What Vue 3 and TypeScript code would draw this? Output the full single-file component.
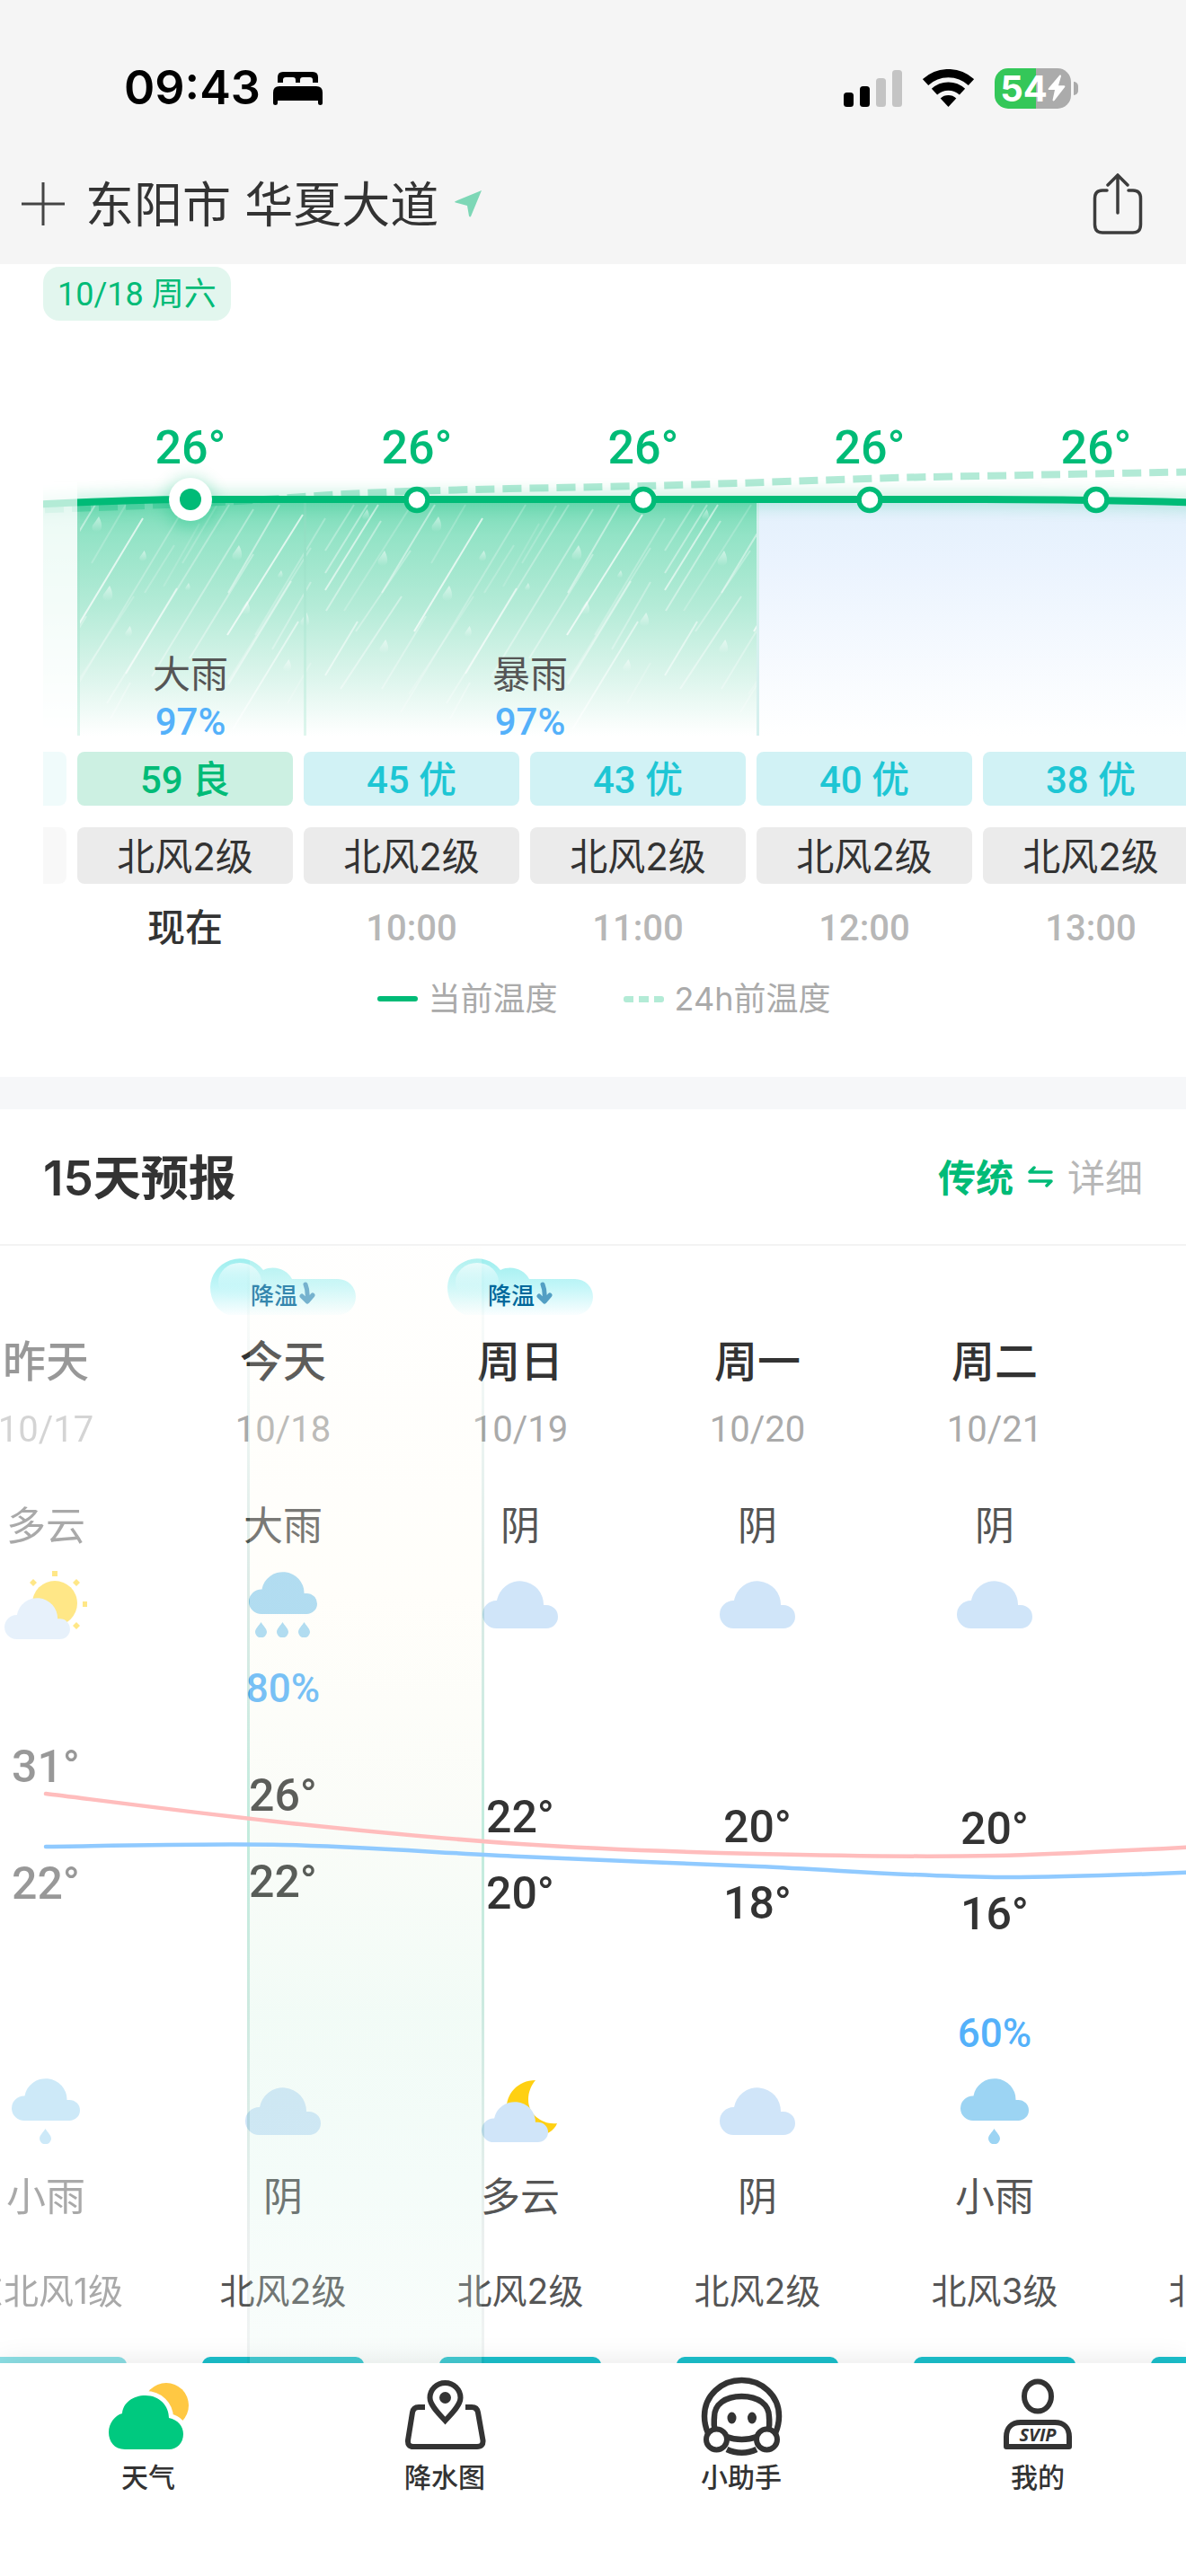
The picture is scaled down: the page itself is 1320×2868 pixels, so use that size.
<script setup lang="ts">
interface Hour {
  temp: string
  aqi: string
  level: 'good' | 'fine'
  wind: string
  time: string
  past?: boolean
}

interface Day {
  name: string
  date: string
  text: string
  icon: string
  rain: string
  high: number | null
  low: number | null
  highY: number
  lowY: number
  nightRain: string
  nightIcon: string
  nightText: string
  wind: string
  cooling?: boolean
  past?: boolean
}

const hours: Hour[] = [
  { temp: '', aqi: '', level: 'good', wind: '', time: '', past: true },
  { temp: '26°', aqi: '59 良', level: 'fine', wind: '北风2级', time: '现在' },
  { temp: '26°', aqi: '45 优', level: 'good', wind: '北风2级', time: '10:00' },
  { temp: '26°', aqi: '43 优', level: 'good', wind: '北风2级', time: '11:00' },
  { temp: '26°', aqi: '40 优', level: 'good', wind: '北风2级', time: '12:00' },
  { temp: '26°', aqi: '38 优', level: 'good', wind: '北风2级', time: '13:00' },
]

// Rain periods, measured in hour columns.
const periods = [
  { text: '', rain: '', span: 1 },
  { text: '大雨', rain: '97%', span: 1 },
  { text: '暴雨', rain: '97%', span: 2 },
  { text: '', rain: '', span: 2 },
]

// Rain streaks inside one 378px tile: x1, y1, x2, y2, opacity.
const streaks: number[][] = [
  [122, 205, 63, 303, 0.45], [175, 220, 99, 346, 0.7], [213, 298, 156, 393, 0.55],
  [62, 223, 1, 323, 0.4], [85, 307, 17, 410, 0.4], [36, 335, 0, 395, 0.5],
  [223, 205, 84, 436, 0.25], [271, 205, 135, 426, 0.3], [298, 210, 185, 396, 0.35],
  [165, 307, 93, 416, 0.2], [95, 256, 34, 346, 0.3], [112, 329, 63, 410, 0.3],
  [257, 206, 219, 270, 0.2], [156, 205, 118, 270, 0.2], [210, 250, 177, 303, 0.2],
  [238, 226, 198, 296, 0.15], [161, 403, 139, 443, 0.3], [298, 260, 227, 376, 0.35],
  [327, 205, 270, 303, 0.45], [353, 216, 269, 350, 0.7], [362, 253, 269, 403, 0.25],
  [340, 290, 270, 405, 0.45], [348, 335, 275, 455, 0.5], [362, 291, 319, 366, 0.3],
  [362, 381, 336, 426, 0.2], [32, 205, 0, 256, 0.3], [47, 205, 0, 281, 0.4],
  [59, 205, 0, 300, 0.6], [96, 205, 21, 323, 0.2], [378, 220, 300, 350, 0.25],
]

// Falling drops inside one tile: x, y, scale.
const drops: number[][] = [
  [118, 218, 1], [171, 256, 0.7], [274, 250, 1], [130, 295, 1], [222, 292, 0.5],
  [155, 340, 0.7], [58, 256, 1], [41, 210, 0.7], [325, 278, 0.5], [350, 325, 0.9],
  [331, 377, 0.8], [60, 355, 0.9], [284, 312, 0.9],
]

const rainAreas = [
  { id: 'rain-a', tiles: [150] },
  { id: 'rain-b', tiles: [150, 528, 906] },
]

const days: Day[] = [
  { name: '昨天', date: '10/17', text: '多云', icon: 'sun-cloud', rain: '', high: 31, low: 22, highY: 94, lowY: 153, nightRain: '', nightIcon: 'light-rain', nightText: '小雨', wind: '东北风1级', past: true },
  { name: '今天', date: '10/18', text: '大雨', icon: 'heavy-rain', rain: '80%', high: 26, low: 22, highY: 126, lowY: 151, nightRain: '', nightIcon: 'overcast', nightText: '阴', wind: '北风2级', cooling: true },
  { name: '周日', date: '10/19', text: '阴', icon: 'overcast', rain: '', high: 22, low: 20, highY: 150, lowY: 164, nightRain: '', nightIcon: 'moon-cloud', nightText: '多云', wind: '北风2级', cooling: true },
  { name: '周一', date: '10/20', text: '阴', icon: 'overcast', rain: '', high: 20, low: 18, highY: 161, lowY: 175, nightRain: '', nightIcon: 'overcast', nightText: '阴', wind: '北风2级' },
  { name: '周二', date: '10/21', text: '阴', icon: 'overcast', rain: '', high: 20, low: 16, highY: 163, lowY: 187, nightRain: '60%', nightIcon: 'light-rain', nightText: '小雨', wind: '北风3级' },
  { name: '', date: '', text: '', icon: '', rain: '', high: null, low: null, highY: 151, lowY: 180, nightRain: '', nightIcon: '', nightText: '', wind: '北风3级' },
]

const DAY_WIDTH = 264

// Catmull-Rom curve through one point per day.
function curve(values: number[]): string {
  const pts = values.map((y, i) => [DAY_WIDTH * i + DAY_WIDTH / 2, y])
  let d = `M${pts[0][0]} ${pts[0][1]}`
  for (let i = 0; i < pts.length - 1; i++) {
    const a = pts[Math.max(i - 1, 0)]
    const b = pts[i]
    const c = pts[i + 1]
    const e = pts[Math.min(i + 2, pts.length - 1)]
    d += ` C${b[0] + (c[0] - a[0]) / 6} ${b[1] + (c[1] - a[1]) / 6} ${c[0] - (e[0] - b[0]) / 6} ${c[1] - (e[1] - b[1]) / 6} ${c[0]} ${c[1]}`
  }
  return d
}

const highCurve = curve(days.map((d) => d.highY))
const lowCurve = curve(days.map((d) => d.lowY))

const tempStyle = (d: Day) => ({
  paddingTop: `${d.highY - 60}px`,
  rowGap: `${d.lowY - d.highY + 11}px`,
})
</script>

<template>
  <div class="app">
    <svg class="defs" aria-hidden="true">
      <symbol id="cloud" viewBox="0 0 84 54" preserveAspectRatio="none">
        <path d="M15.500 54A15.500 15.500 0 0 1 15.500 23H16A26.200 26.200 0 0 1 68 28H71A13 13 0 0 1 71 54Z" />
      </symbol>
      <symbol id="drop" viewBox="0 0 13 17">
        <path d="M6.500 0C9 4 13 7.500 13 11A6.500 6.300 0 0 1 0 11C0 7.500 4 4 6.500 0Z" />
      </symbol>
      <symbol id="overcast" viewBox="0 0 96 96">
        <use href="#cloud" x="6" y="20" width="84" height="54" fill="#d0e5f9" />
      </symbol>
      <symbol id="light-rain" viewBox="0 0 96 96">
        <g fill="#9cd4f3">
          <use href="#cloud" x="10" y="10" width="76" height="48" />
          <use href="#drop" x="41" y="67" width="13" height="17" />
        </g>
      </symbol>
      <symbol id="heavy-rain" viewBox="0 0 96 96">
        <g fill="#9cd4f3">
          <use href="#cloud" x="10" y="10" width="76" height="48" />
          <use href="#drop" x="17" y="67" width="13" height="17" />
          <use href="#drop" x="41" y="67" width="13" height="17" />
          <use href="#drop" x="65" y="67" width="13" height="17" />
        </g>
      </symbol>
      <symbol id="sun-cloud" viewBox="0 0 96 96">
        <g fill="#ffd012">
          <circle cx="58" cy="46" r="25" />
          <rect x="55" y="10" width="6" height="6" />
          <rect x="89" y="44" width="5" height="6" />
          <path d="M34 19l4 4-4 4-4-4zM82 19l4 4-4 4-4-4zM82 67l4 4-4 4-4-4z" />
        </g>
        <use href="#cloud" x="2" y="39" width="73" height="47" fill="#d0e5f9" />
      </symbol>
      <symbol id="moon-cloud" viewBox="0 0 96 96">
        <path d="M65 13C45 13 32 29 33 45C34 64 50 75 65 75C77 75 86 69 89 61C74 63 57 52 57 35C57 26 60 19 65 13Z" fill="#ffd012" />
        <use href="#cloud" x="5" y="36" width="74" height="46" fill="#d0e5f9" />
      </symbol>
    </svg>

    <header class="top">
      <div class="status">
        <div class="status-left">
          <span class="clock">09:43</span>
          <svg width="55" height="37" viewBox="0 0 55 37">
            <path d="M5 12V6Q5 0 11 0H44Q50 0 50 6V12H44V9Q44 6 41 6H33Q30 6 30 9V12H25V9Q25 6 22 6H14Q11 6 11 9V12Z" />
            <path d="M0 23Q0 16 7 16H48Q55 16 55 23V35Q55 37 52.500 37Q50 37 50 35V32H5V35Q5 37 2.500 37Q0 37 0 35Z" />
          </svg>
        </div>
        <div class="status-right">
          <svg width="65" height="42" viewBox="0 0 65 42">
            <rect x="0" y="26" width="11" height="16" rx="3.500" />
            <rect x="18" y="19" width="11" height="23" rx="3.500" />
            <rect x="36" y="10" width="11" height="32" rx="3.500" fill="#c4c4c4" />
            <rect x="54" y="1" width="11" height="41" rx="3.500" fill="#c4c4c4" />
          </svg>
          <svg width="57" height="42" viewBox="0 0 57 42">
            <g fill="none" stroke="#000" stroke-width="9.200">
              <path d="M3.100 14.500A37.400 37.400 0 0 1 53.900 14.500" />
              <path d="M13 25.200A22.800 22.800 0 0 1 44 25.200" />
            </g>
            <path d="M28.500 42L19.700 32.400A13 13 0 0 1 37.300 32.400Z" />
          </svg>
          <div class="battery">
            <div class="battery-body">
              <span>54</span>
              <svg width="20" height="30" viewBox="0 0 20 30"><path d="M13.500 0.500L0.800 15.500Q0 17 1.800 17H8L5.500 28.500Q6 30 7.500 29L19.300 13.800Q20 12.200 18.200 12.200H12L15 1.800Q15 0 13.500 0.500Z" fill="#fff" /></svg>
            </div>
            <i class="battery-cap"></i>
          </div>
        </div>
      </div>
      <div class="bar">
        <button class="icon-btn" type="button" aria-label="添加城市">
          <svg width="48" height="48" viewBox="0 0 48 48"><path d="M24 0V48M0 24H48" stroke="#444" stroke-width="3" /></svg>
        </button>
        <h1 class="place">东阳市 华夏大道</h1>
        <svg class="locate" width="30" height="30" viewBox="0 0 30 30"><path d="M30 0L18 29Q17 30 16 28.500L14 17L1 13.500Q-0.500 12.500 1 12Z" fill="#7dd7b6" /></svg>
        <button class="icon-btn share" type="button" aria-label="分享">
          <svg width="56" height="68" viewBox="0 0 56 68" fill="none" stroke="#3c3c3c" stroke-width="3.500" stroke-linecap="round">
            <path d="M16 19H11Q2.500 19 2.500 28V57Q2.500 66 11 66H45Q53.500 66 53.500 57V28Q53.500 19 45 19H40" />
            <path d="M28 2V44M17 13L28 2L39 13" />
          </svg>
        </button>
      </div>
    </header>

    <main class="content">
      <section class="hourly">
        <div class="day-tag">10/18 周六</div>
        <div class="scroller">
          <div class="track">
            <div class="chart">
              <svg class="chart-bg" width="1512" height="462" viewBox="0 0 1512 462">
                <defs>
                  <linearGradient id="rain-fill" x1="0" y1="0" x2="0" y2="1">
                    <stop offset="0" stop-color="#76dbb6" />
                    <stop offset="0.150" stop-color="#93e3c6" />
                    <stop offset="0.450" stop-color="#b4ebd7" />
                    <stop offset="0.750" stop-color="#dcf5ec" />
                    <stop offset="1" stop-color="#fff" />
                  </linearGradient>
                  <linearGradient id="cloud-fill" x1="0" y1="0" x2="0" y2="1">
                    <stop offset="0" stop-color="#e3f0fc" />
                    <stop offset="0.250" stop-color="#eaf3fe" />
                    <stop offset="1" stop-color="#fff" />
                  </linearGradient>
                  <linearGradient id="edge" x1="0" y1="0" x2="0" y2="1">
                    <stop offset="0" stop-color="#86dcbd" />
                    <stop offset="1" stop-color="#dff6ee" />
                  </linearGradient>
                  <linearGradient id="drop-fill" x1="0" y1="0" x2="0" y2="1">
                    <stop offset="0" stop-color="#fff" stop-opacity="0.550" />
                    <stop offset="1" stop-color="#fff" stop-opacity="0" />
                  </linearGradient>
                  <filter id="glow" x="-10%" y="-400%" width="120%" height="900%" filterUnits="userSpaceOnUse">
                    <feGaussianBlur stdDeviation="9" />
                  </filter>
                  <clipPath id="rain-a"><rect x="252" y="203" width="252" height="259" /></clipPath>
                  <clipPath id="rain-b"><rect x="504" y="203" width="504" height="259" /></clipPath>
                </defs>
                <rect x="0" y="203" width="252" height="259" fill="url(#rain-fill)" opacity="0.500" />
                <rect x="252" y="200" width="756" height="262" fill="url(#rain-fill)" />
                <rect x="1008" y="200" width="504" height="262" fill="url(#cloud-fill)" />
                <g v-for="area in rainAreas" :key="area.id" :clip-path="`url(#${area.id})`">
                  <g v-for="t in area.tiles" :key="t" :transform="`translate(${t} 0)`">
                    <line v-for="(s, i) in streaks" :key="i" :x1="s[0]" :y1="s[1]" :x2="s[2]" :y2="s[3]" stroke="#fff" :stroke-opacity="s[4]" stroke-width="2" />
                    <path v-for="(p, i) in drops" :key="'d' + i" :transform="`translate(${p[0]} ${p[1]}) scale(${p[2]})`" d="M8 0Q12 8 11 13Q9 18 4 17Q-1 15 1 10Q4 6 8 0Z" fill="url(#drop-fill)" />
                  </g>
                </g>
                <rect x="252" y="200" width="3" height="262" fill="url(#edge)" />
                <rect x="504" y="200" width="3" height="262" fill="url(#edge)" />
                <rect x="1008" y="200" width="3" height="262" fill="#d5f0ee" />
                <path d="M126 208C230 204 300 199 378 199H1260C1386 199 1440 201 1512 203" stroke="#00bb77" stroke-width="12" fill="none" opacity="0.300" filter="url(#glow)" />
                <path d="M126 213C260 209 400 204 504 196S760 187 882 184S1140 175 1200 174S1400 170 1512 168" stroke="#00bb77" stroke-opacity="0.300" stroke-width="8" stroke-dasharray="21 9" fill="none" />
                <path d="M126 208C230 204 300 199 378 199H1260C1386 199 1440 201 1512 203" stroke="#00bb77" stroke-width="8" fill="none" />
                <rect x="0" y="180" width="252" height="282" fill="#fff" opacity="0.700" />
                <circle cx="378" cy="203" r="28" fill="#00bb77" opacity="0.300" filter="url(#glow)" />
                <circle cx="378" cy="199" r="24" fill="#fff" />
                <circle cx="378" cy="199" r="12" fill="#00bb77" />
                <circle v-for="n in 4" :key="n" :cx="378 + 252 * n" cy="199.500" r="12" fill="#fff" stroke="#00bb77" stroke-width="5.500" />
              </svg>
              <div class="temps">
                <span v-for="(h, i) in hours" :key="i">{{ h.temp }}</span>
              </div>
              <div class="periods">
                <div v-for="(p, i) in periods" :key="i" class="period" :style="{ flexGrow: p.span }">
                  <span class="period-text">{{ p.text }}</span>
                  <span class="period-rain">{{ p.rain }}</span>
                </div>
              </div>
            </div>
            <ul class="hours">
              <li v-for="(h, i) in hours" :key="i" class="hour" :class="{ past: h.past, now: i === 1 }">
                <span class="aqi" :class="h.level">{{ h.aqi }}</span>
                <span class="wind">{{ h.wind }}</span>
                <span class="time">{{ h.time }}</span>
              </li>
            </ul>
          </div>
        </div>
        <div class="legend">
          <span class="legend-item"><i class="line"></i>当前温度</span>
          <span class="legend-item"><i class="dash"><b></b><b></b><b></b></i>24h前温度</span>
        </div>
      </section>

      <section class="daily">
        <div class="daily-head">
          <h2>15天预报</h2>
          <button class="toggle" type="button">
            <span class="on">传统</span>
            <svg width="28" height="24" viewBox="0 0 28 24" fill="none" stroke="#00bb77" stroke-width="3.500" stroke-linecap="round" stroke-linejoin="round">
              <path d="M26 7H2L7 2M2 17H26L21 22" />
            </svg>
            <span>详细</span>
          </button>
        </div>
        <div class="days-view">
          <div class="days">
            <div v-for="(d, i) in days" :key="i" class="day" :class="{ past: d.past }">
              <div class="badge-slot">
                <div v-if="d.cooling" class="badge">
                  <svg class="badge-bg" width="162" height="64" viewBox="0 0 162 64">
                    <defs>
                      <linearGradient id="cool" gradientUnits="userSpaceOnUse" x1="0" y1="0" x2="0" y2="64">
                        <stop offset="0" stop-color="#9deeee" />
                        <stop offset="0.500" stop-color="#c2f6f8" />
                        <stop offset="1" stop-color="#fafeff" />
                      </linearGradient>
                      <linearGradient id="shine" x1="0" y1="0" x2="0" y2="1">
                        <stop offset="0" stop-color="#e4fbfc" />
                        <stop offset="1" stop-color="#c8f7f9" stop-opacity="0" />
                      </linearGradient>
                    </defs>
                    <path d="M20 64C8 60 0 48 0 33A33 33 0 0 1 59 14C72 8 86 14 91 24H142A20 20 0 0 1 142 64Z" fill="url(#cool)" />
                    <ellipse cx="33" cy="27" rx="24" ry="21" fill="url(#shine)" />
                  </svg>
                  <span>降温</span>
                  <svg width="18" height="26" viewBox="0 0 18 26" fill="none" stroke="#539fc4" stroke-width="5" stroke-linecap="round" stroke-linejoin="round"><path d="M7 3Q10 10 9 21M3 16L9 22L15 15" /></svg>
                </div>
              </div>
              <div class="day-name">{{ d.name }}</div>
              <div class="day-date">{{ d.date }}</div>
              <div class="day-text">{{ d.text }}</div>
              <svg class="day-icon" width="96" height="96"><use v-if="d.icon" :href="'#' + d.icon" /></svg>
              <div class="day-rain">{{ d.rain }}</div>
              <div class="day-temps" :style="tempStyle(d)">
                <span v-if="d.high !== null">{{ d.high }}°</span>
                <span v-if="d.low !== null">{{ d.low }}°</span>
              </div>
              <div class="day-rain night">{{ d.nightRain }}</div>
              <svg class="day-icon night" width="96" height="96"><use v-if="d.nightIcon" :href="'#' + d.nightIcon" /></svg>
              <div class="day-text night">{{ d.nightText }}</div>
              <div class="day-wind">{{ d.wind }}</div>
              <div class="day-aqi"></div>
            </div>
            <div class="today-mask"></div>
            <svg class="curves" width="1584" height="336" viewBox="0 0 1584 336" fill="none" stroke-width="4.500" stroke-linecap="round">
              <path :d="highCurve" stroke="#ffbdbd" />
              <path :d="lowCurve" stroke="#90caff" />
            </svg>
          </div>
        </div>
      </section>
    </main>

    <nav class="tabs">
      <a href="#weather" class="tab">
        <svg width="96" height="90" viewBox="0 0 96 90">
          <circle cx="68" cy="33" r="25" fill="#ffc843" />
          <path d="M22 82C10 82 4 73 4 63C4 53 11 44 19 42C20 30 31 22 45 22C60 22 71 33 71 47C81 49 87 56 87 65C87 75 80 82 71 82Z" fill="#fff" stroke="#fff" stroke-width="10" />
          <path d="M22 82C10 82 4 73 4 63C4 53 11 44 19 42C20 30 31 22 45 22C60 22 71 33 71 47C81 49 87 56 87 65C87 75 80 82 71 82Z" fill="#00c97f" />
        </svg>
        <span>天气</span>
      </a>
      <a href="#rain-map" class="tab">
        <svg width="96" height="90" viewBox="0 0 96 90" fill="none" stroke="#333" stroke-width="6">
          <path d="M26 35H19Q13 35 12 41L7 72Q6.500 79 13 79H84Q91 79 90.500 72L85 41Q84 35 78 35H71" />
          <path d="M48.500 8C58 8 65.500 15.500 65.500 24.500C65.500 33 55 43 48.500 50C42 43 31.500 33 31.500 24.500C31.500 15.500 39 8 48.500 8Z" />
          <circle cx="48.500" cy="24.500" r="6.500" fill="#333" stroke="none" />
        </svg>
        <span>降水图</span>
      </a>
      <a href="#assistant" class="tab">
        <svg width="96" height="90" viewBox="0 0 96 90" fill="none" stroke="#333" stroke-width="6.500">
          <path d="M11 64C7.500 56 7 50 7 45C7 22 26 5 48.500 5S90 22 90 45C90 50 89.500 56 86 64" />
          <path d="M19 62C16.500 52 18 50 18 46C18 32 30 23 48.500 23S79 32 79 46C79 50 80.500 52 78 62" />
          <path d="M32 68C42 72 55 72 65 68M32 82C42 87 55 87 65 82" />
          <circle cx="20.500" cy="71" r="11.500" fill="#fff" stroke-width="6" />
          <circle cx="76.500" cy="71" r="11.500" fill="#fff" stroke-width="6" />
          <ellipse cx="37.500" cy="47" rx="5" ry="6.500" fill="#333" stroke="none" />
          <ellipse cx="60" cy="47" rx="5" ry="6.500" fill="#333" stroke="none" />
        </svg>
        <span>小助手</span>
      </a>
      <a href="#mine" class="tab">
        <svg width="96" height="90" viewBox="0 0 96 90" fill="none" stroke="#333" stroke-width="6" stroke-linejoin="round">
          <ellipse cx="48" cy="23" rx="15" ry="16.500" />
          <path d="M13 79V68C13 58 19 52 29 52H67C77 52 83 58 83 68V79Z" />
          <text x="48" y="73" class="svip">SVIP</text>
        </svg>
        <span>我的</span>
      </a>
    </nav>
  </div>
</template>

<style>
body {
  margin: 0;
  background: #fff;
}
</style>

<style scoped>
.app {
  --green: #00bb77;
  --blue: #54b1fa;
  --ink: #333;
  --num: Roboto, "Noto Sans CJK SC", sans-serif;
  display: flex;
  flex-direction: column;
  height: 100vh;
  overflow: hidden;
  color: var(--ink);
  font-family: Inter, "Noto Sans CJK SC", sans-serif;
}
.defs {
  position: absolute;
  width: 0;
  height: 0;
}
svg {
  display: block;
  flex: none;
}
button {
  padding: 0;
  border: 0;
  background: none;
  color: inherit;
  font: inherit;
}
.top {
  flex: none;
  background: #f5f5f5;
}
.status {
  box-sizing: border-box;
  display: flex;
  justify-content: space-between;
  align-items: center;
  height: 160px;
  padding: 36px 120px 0 138px;
}
.status-left,
.status-right,
.battery {
  display: flex;
  align-items: center;
}
.status-left {
  gap: 14px;
}
.status-right {
  gap: 23px;
}
.clock {
  color: #000;
  font: 600 52px/60px Inter, sans-serif;
}
.battery {
  gap: 3px;
}
.battery-body {
  display: flex;
  justify-content: center;
  align-items: center;
  width: 85px;
  height: 45px;
  border-radius: 15px;
  background: linear-gradient(90deg, #34c759 54%, #ababab 54%);
  color: #fff;
  font: 700 40px/45px Inter, sans-serif;
}
.battery-cap {
  width: 5px;
  height: 15px;
  border-radius: 0 5px 5px 0;
  background: #ababab;
}
.bar {
  display: flex;
  align-items: center;
  height: 134px;
  padding: 0 48px 0 24px;
}
.place {
  height: 72px;
  margin: 0 18px 0 23px;
  font-size: 54px;
  font-weight: 400;
  line-height: 76px;
}
.share {
  margin-left: auto;
}
.content {
  flex: 1;
  min-height: 0;
  overflow: hidden;
}
.hourly {
  padding: 3px 0 63px;
}
.day-tag {
  width: max-content;
  height: 60px;
  margin-left: 48px;
  padding: 0 16px;
  border-radius: 18px;
  background: #e2f6ee;
  color: var(--green);
  font: 400 36px/62px var(--num);
}
.scroller {
  margin-left: 48px;
  overflow: hidden;
}
.track {
  width: 1512px;
  margin-left: -214px;
}
.chart {
  position: relative;
  box-sizing: border-box;
  display: flex;
  flex-direction: column;
  justify-content: space-between;
  height: 480px;
  padding: 112px 0 12px;
}
.chart-bg {
  position: absolute;
  top: 0;
  left: 0;
}
.temps,
.periods {
  position: relative;
  display: flex;
}
.temps span {
  flex: 1;
  color: var(--green);
  font: 500 52px/60px var(--num);
  text-align: center;
}
.period {
  display: flex;
  flex: 1 1 0;
  flex-direction: column;
  align-items: center;
  gap: 6px;
}
.period-text {
  height: 54px;
  color: #555;
  font-size: 42px;
  line-height: 56px;
}
.period-rain {
  color: var(--blue);
  font: 500 42px/42px var(--num);
}
.hours {
  display: flex;
  margin: 0;
  padding: 0;
  list-style: none;
}
.hour {
  display: flex;
  flex: 1;
  flex-direction: column;
  padding-right: 12px;
  text-align: center;
}
.hour.past {
  opacity: 0.3;
}
.aqi {
  height: 60px;
  border-radius: 8px;
  font: 500 42px/64px var(--num);
}
.aqi.fine {
  background: #ccf0e2;
  color: var(--green);
}
.aqi.good {
  background: #d1f2f5;
  color: #1ec6d4;
}
.wind {
  height: 63px;
  margin-top: 24px;
  border-radius: 8px;
  background: #ebebeb;
  font-size: 42px;
  line-height: 66px;
}
.time {
  height: 60px;
  margin-top: 18px;
  color: #b7b7b7;
  font: 500 40px/64px var(--num);
}
.now .time {
  color: var(--ink);
  font-size: 42px;
}
.legend {
  display: flex;
  justify-content: center;
  gap: 73px;
  margin-top: 26px;
  padding-left: 24px;
}
.legend-item {
  display: flex;
  align-items: center;
  gap: 12px;
  height: 48px;
  color: #aaa;
  font-size: 36px;
  line-height: 50px;
}
.line {
  width: 45px;
  height: 6px;
  border-radius: 3px;
  background: var(--green);
}
.dash {
  display: flex;
  gap: 6px;
}
.dash b {
  width: 11px;
  height: 7px;
  background: #b3ebd6;
}
.dash b:first-child {
  border-radius: 3px 0 0 3px;
}
.dash b:last-child {
  border-radius: 0 3px 3px 0;
}
.daily {
  border-top: 36px solid #f6f7f9;
}
.daily-head {
  display: flex;
  justify-content: space-between;
  align-items: center;
  height: 150px;
  padding: 0 48px;
  border-bottom: 2px solid #f3f3f3;
}
h2 {
  height: 72px;
  margin: 0;
  font-size: 53px;
  font-weight: 600;
  line-height: 76px;
}
.toggle {
  display: flex;
  align-items: center;
  gap: 16px;
  height: 60px;
  color: #b7b7b7;
  font-size: 42px;
  line-height: 60px;
}
.toggle span {
  height: 60px;
  line-height: 64px;
}
.toggle .on {
  color: var(--green);
  font-weight: 700;
}
.days-view {
  overflow: hidden;
}
.days {
  position: relative;
  display: flex;
  width: max-content;
  margin-left: -81px;
}
.day {
  display: flex;
  flex-direction: column;
  align-items: center;
  width: 264px;
  padding-top: 13px;
  white-space: nowrap;
}
.day.past {
  opacity: 0.5;
}
.badge-slot {
  height: 64px;
}
.badge {
  position: relative;
  box-sizing: border-box;
  display: flex;
  justify-content: center;
  gap: 2px;
  width: 162px;
  height: 64px;
  padding-top: 27px;
}
.badge-bg {
  position: absolute;
  inset: 0;
}
.badge span {
  position: relative;
  color: #00689b;
  font-size: 26px;
  font-weight: 500;
  line-height: 32px;
}
.badge > svg:last-child {
  position: relative;
}
.day-name {
  height: 60px;
  margin-top: 20px;
  font-size: 48px;
  font-weight: 500;
  line-height: 64px;
}
.day-date {
  height: 48px;
  margin-top: 22px;
  color: #aaa;
  font: 400 40px/52px var(--num);
}
.day-text {
  height: 54px;
  margin-top: 56px;
  color: #555;
  font-size: 44px;
  line-height: 58px;
}
.day-icon {
  margin-top: 15px;
}
.day-rain {
  height: 48px;
  margin-top: 20px;
  color: var(--blue);
  font: 500 44px/50px var(--num);
}
.day-temps {
  box-sizing: border-box;
  display: flex;
  flex-direction: column;
  height: 336px;
  font: 500 50px/60px var(--num);
}
.day-rain.night {
  margin-top: 0;
}
.day-icon.night {
  margin-top: 16px;
}
.day-text.night {
  margin-top: 18px;
}
.day-wind {
  height: 48px;
  margin-top: 54px;
  color: #555;
  font-size: 39px;
  line-height: 52px;
}
.day-aqi {
  width: 180px;
  height: 60px;
  margin-top: 51px;
  border-radius: 9px;
  background: #1bc0cc;
}
.today-mask {
  position: absolute;
  top: 0;
  bottom: 0;
  left: 356px;
  width: 258px;
  border: solid transparent;
  border-width: 0 3px;
  border-image: linear-gradient(rgba(0, 90, 70, 0), rgba(0, 110, 80, 0.14) 30%, rgba(0, 175, 115, 0.24) 50%, rgba(0, 150, 100, 0.2) 65%, rgba(0, 60, 50, 0.08) 85%, rgba(0, 60, 50, 0.05)) 1;
  background: linear-gradient(rgba(255, 253, 248, 0.2), rgba(255, 250, 232, 0.22) 30%, rgba(236, 243, 224, 0.22) 48%, rgba(196, 238, 216, 0.22) 66%, rgba(200, 240, 224, 0.22) 76%, rgba(230, 246, 240, 0.2)) padding-box;
}
.curves {
  position: absolute;
  top: 516px;
  left: 0;
}
.tabs {
  position: relative;
  display: flex;
  flex: none;
  height: 237px;
  background: #fff;
  box-shadow: 0 0 30px rgba(0, 0, 0, 0.1);
}
.tab {
  display: flex;
  flex: 1;
  flex-direction: column;
  align-items: center;
  gap: 4px;
  padding-top: 14px;
  color: var(--ink);
  font-size: 30px;
  font-weight: 500;
  line-height: 38px;
  text-decoration: none;
}
.svip {
  fill: #333;
  stroke: none;
  font: italic 700 20px "Open Sans", sans-serif;
  text-anchor: middle;
}
</style>
